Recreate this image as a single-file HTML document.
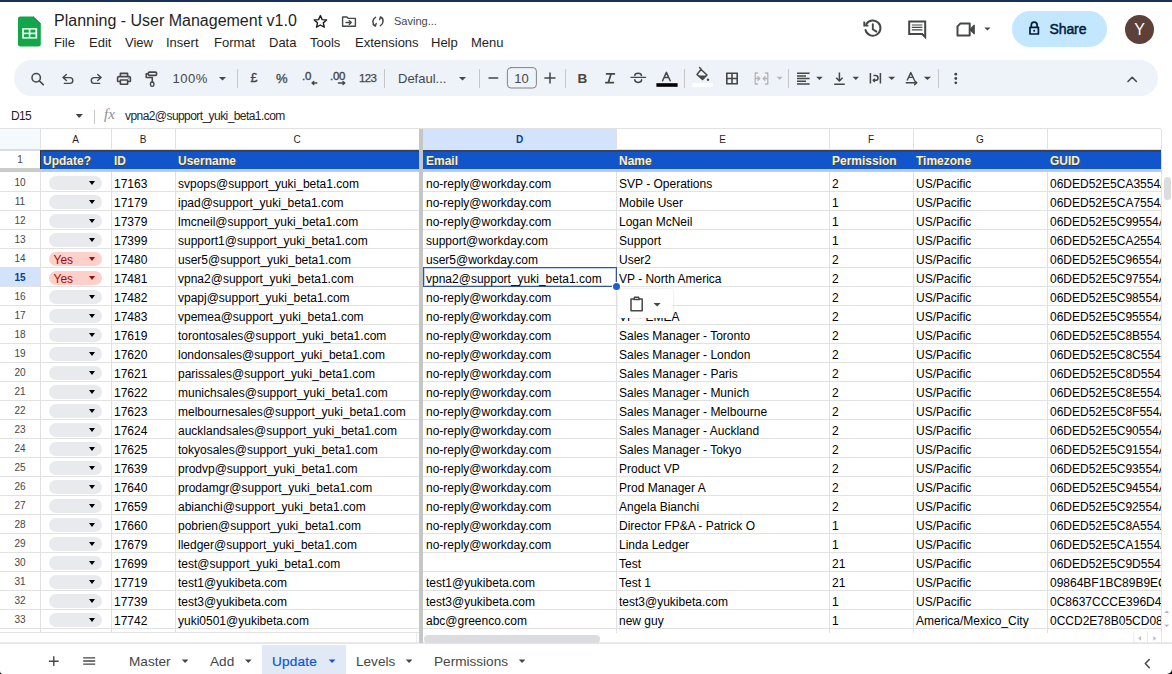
<!DOCTYPE html>
<html><head><meta charset="utf-8">
<style>
*{box-sizing:border-box;margin:0;padding:0}
html,body{width:1172px;height:674px;overflow:hidden;background:#fff;font-family:"Liberation Sans",sans-serif;color:#1f1f1f;position:relative}
.abs{position:absolute}
#topbar{position:absolute;left:0;top:0;width:1172px;height:2px;background:#1a3157}
#logo{position:absolute;left:18.2px;top:16px;width:23px;height:31px}
#title{position:absolute;left:54px;top:12px;font-size:16px;color:#1f1f1f;white-space:nowrap;letter-spacing:0px}
.menu{position:absolute;top:35px;font-size:13px;color:#1f1f1f;white-space:nowrap}
#saving{position:absolute;left:394px;top:15px;font-size:11px;color:#444746}
.ico{position:absolute}
#toolbar{position:absolute;left:14px;top:60px;width:1144px;height:36px;border-radius:18px;background:#eef2f9}
.sep{position:absolute;top:69px;width:1px;height:19px;background:#c7c7c7}
.tt{position:absolute;font-size:12.5px;color:#444746;white-space:nowrap}
.arr{position:absolute;width:0;height:0;border-left:3.5px solid transparent;border-right:3.5px solid transparent;border-top:4px solid #444746}
#share{position:absolute;left:1012px;top:11px;width:95px;height:36px;border-radius:18px;background:#c2e7ff}
#sharetxt{position:absolute;left:1049.5px;top:20.5px;font-size:14px;color:#001d35;-webkit-text-stroke:0.45px #001d35;letter-spacing:-0.1px}
#avatar{position:absolute;left:1125px;top:14.5px;width:29px;height:29px;border-radius:14.5px;background:#5d4037;color:#fff;font-size:16px;text-align:center;line-height:30px}
/* formula bar */
#namebox{position:absolute;left:11px;top:109px;font-size:12px;color:#1f1f1f;letter-spacing:-0.7px}
#fx{position:absolute;left:104px;top:106px;font-size:15px;color:#8e8e8e;font-family:"Liberation Serif",serif;font-style:italic}
#ftext{position:absolute;left:125px;top:109px;font-size:12px;color:#1f1f1f;white-space:nowrap;letter-spacing:-0.57px}
/* grid */
#colhdr{position:absolute;left:0;top:128px;width:1161px;height:23px;background:#fff;border-top:1px solid #e1e1e1}
.ch{position:absolute;top:129px;height:21px;font-size:10px;color:#1f1f1f;text-align:center;line-height:21px}
.ch.sel{background:#d3e3fd;color:#0b3d91;font-weight:bold}
.vl{position:absolute;width:1px;background:#e1e1e1}
.hl{position:absolute;left:0;width:1161px;height:1px;background:#e2e2e2}
.rh{position:absolute;left:0;width:40px;height:19px;font-size:10px;color:#444746;text-align:center;line-height:21px}
.rh.sel{background:#d3e3fd;color:#0b3d91;font-weight:bold}
.c{position:absolute;height:19px;padding-left:3px;font-size:12px;line-height:19px;color:#000;white-space:nowrap;overflow:hidden}
.chip{position:absolute;left:49px;width:53px;height:14px;border-radius:7px;background:#e8eaed}
.chip i{position:absolute;left:40px;top:4.5px;width:0;height:0;border-left:3.7px solid transparent;border-right:3.7px solid transparent;border-top:4.3px solid #000}
.chip.yes{background:#ffcfc9}
.chip.yes span{position:absolute;left:4.5px;top:-1.3px;font-size:12px;line-height:18px;color:#a00d0d}
.chip.yes i{border-top-color:#9a0c0c}
#hdrrow{position:absolute;left:40px;top:150px;width:1121px;height:19px;background:#1155cc;border-top:2px solid #3a4254;border-left:1px solid #2a3448}
.hc{position:absolute;top:152px;height:18px;font-size:12px;font-weight:bold;line-height:18px;color:#f7f3e0;text-shadow:1px 1px 0 #4d4010;white-space:nowrap}
#tabs{position:absolute;left:0;top:643px;width:1172px;height:31px;background:#fff;border-top:1px solid #dfe6ee}
.tab{position:absolute;top:654px;font-size:13.6px;color:#444746;white-space:nowrap}
#selbox{position:absolute;left:423px;top:267px;width:194px;height:20px;border:1px solid #33569a;box-shadow:inset 0 0 0 1px #bcd3f5}
#handle{position:absolute;left:612.5px;top:283.3px;width:7px;height:7px;border-radius:3.5px;background:#1b5fd2;box-shadow:0 0 0 1px #fff}
#paste{position:absolute;left:618px;top:289px;width:55px;height:29px;background:#fff;border-radius:3px;box-shadow:0 0 2px rgba(0,0,0,.18)}
#corner{position:absolute;left:0;top:129px;width:40px;height:21px;background:#f4fafd}
</style></head>
<body>
<div id="topbar"></div>
<!-- logo -->
<svg id="logo" viewBox="0 0 23 31" width="23" height="31">
  <path d="M2.2 0.5 H15 L22.8 8 V28.5 A2.2 2.2 0 0 1 20.6 30.5 H2.2 A2.2 2.2 0 0 1 0 28.5 V2.7 A2.2 2.2 0 0 1 2.2 0.5Z" fill="#13a54a"/>
  <path d="M15 0.5 L22.8 8" stroke="#0d3b66" stroke-width="0.8" fill="none"/>
  <rect x="4.2" y="12.2" width="15" height="10.4" fill="#fff"/>
  <rect x="5.8" y="13.6" width="5" height="3" fill="#13a54a"/>
  <rect x="12.4" y="13.6" width="5" height="3" fill="#13a54a"/>
  <rect x="5.8" y="18.2" width="5" height="3" fill="#13a54a"/>
  <rect x="12.4" y="18.2" width="5" height="3" fill="#13a54a"/>
</svg>
<div id="title">Planning - User Management v1.0</div>
<div class="menu" style="left:54px">File</div>
<div class="menu" style="left:89px">Edit</div>
<div class="menu" style="left:125px">View</div>
<div class="menu" style="left:166px">Insert</div>
<div class="menu" style="left:214px">Format</div>
<div class="menu" style="left:269px">Data</div>
<div class="menu" style="left:310px">Tools</div>
<div class="menu" style="left:355px">Extensions</div>
<div class="menu" style="left:431px">Help</div>
<div class="menu" style="left:471px">Menu</div>
<div id="saving">Saving...</div>

<div id="share"></div>
<div id="sharetxt">Share</div>
<div id="avatar">Y</div>

<div id="toolbar"></div>
<div class="sep" style="left:237px"></div>
<div class="sep" style="left:384px"></div>
<div class="sep" style="left:479px"></div>
<div class="sep" style="left:565px"></div>
<div class="sep" style="left:684px"></div>
<div class="sep" style="left:788px"></div>
<div class="sep" style="left:938px"></div>
<div class="tt" style="left:172.5px;top:71px;font-size:13px;letter-spacing:0.5px">100%</div>
<div class="tt" style="left:250.5px;top:71px;font-size:12.5px;-webkit-text-stroke:0.35px #444746">&#163;</div>
<div class="tt" style="left:276px;top:71px;font-size:13px;-webkit-text-stroke:0.3px #444746">%</div>
<div class="tt" style="left:302px;top:70px;font-size:11.5px;-webkit-text-stroke:0.35px #444746;letter-spacing:-0.3px">.0</div>
<div class="tt" style="left:330px;top:70px;font-size:11.5px;-webkit-text-stroke:0.35px #444746;letter-spacing:-0.3px">.00</div>
<div class="tt" style="left:359px;top:72px;font-size:11.5px;letter-spacing:-0.6px;-webkit-text-stroke:0.25px #444746">123</div>
<div class="tt" style="left:398px;top:71px;font-size:13px">Defaul...</div>
<div class="tt" style="left:514px;top:71px;font-size:13px;width:15px;text-align:center">10</div>
<div class="tt" style="left:577.5px;top:70.5px;font-size:13.5px;font-weight:bold">B</div>


<div id="namebox">D15</div>
<div class="arr" style="left:76px;top:114px"></div>
<div class="sep" style="left:94px;top:110px;height:14px"></div>
<div id="fx">fx</div>
<div id="ftext">vpna2@support_yuki_beta1.com</div>

<!-- grid -->
<div id="colhdr"></div><div id="corner"></div><div class="abs" style="left:0;top:149px;width:1161px;height:2px;background:#dadce0"></div>
<div class="ch" style="left:40px;width:71px">A</div><div class="ch" style="left:111px;width:64px">B</div><div class="ch" style="left:175px;width:244px">C</div><div class="ch sel" style="left:423px;width:193px">D</div><div class="ch" style="left:616px;width:213px">E</div><div class="ch" style="left:829px;width:84px">F</div><div class="ch" style="left:913px;width:134px">G</div><div class="hl" style="top:191px"></div><div class="hl" style="top:210px"></div><div class="hl" style="top:229px"></div><div class="hl" style="top:248px"></div><div class="hl" style="top:267px"></div><div class="hl" style="top:286px"></div><div class="hl" style="top:305px"></div><div class="hl" style="top:324px"></div><div class="hl" style="top:343px"></div><div class="hl" style="top:362px"></div><div class="hl" style="top:381px"></div><div class="hl" style="top:400px"></div><div class="hl" style="top:419px"></div><div class="hl" style="top:438px"></div><div class="hl" style="top:457px"></div><div class="hl" style="top:476px"></div><div class="hl" style="top:495px"></div><div class="hl" style="top:514px"></div><div class="hl" style="top:533px"></div><div class="hl" style="top:552px"></div><div class="hl" style="top:571px"></div><div class="hl" style="top:590px"></div><div class="hl" style="top:609px"></div><div class="hl" style="top:628px"></div><div class="vl" style="left:40px;top:129px;height:504px"></div><div class="vl" style="left:111px;top:129px;height:504px"></div><div class="vl" style="left:175px;top:129px;height:504px"></div><div class="vl" style="left:616px;top:129px;height:504px"></div><div class="vl" style="left:829px;top:129px;height:504px"></div><div class="vl" style="left:913px;top:129px;height:504px"></div><div class="vl" style="left:1047px;top:129px;height:504px"></div><div class="vl" style="left:1161px;top:129px;height:504px;background:#e3e3e3"></div>
<div class="rh" style="top:172px">10</div>
<div class="chip" style="top:176px"><i></i></div>
<div class="c" style="top:175px;left:111px;width:64px">17163</div>
<div class="c" style="top:175px;left:175px;width:244px">svpops@support_yuki_beta1.com</div>
<div class="c" style="top:175px;left:423px;width:193px">no-reply@workday.com</div>
<div class="c" style="top:175px;left:616px;width:213px">SVP - Operations</div>
<div class="c" style="top:175px;left:829px;width:84px">2</div>
<div class="c" style="top:175px;left:913px;width:134px">US/Pacific</div>
<div class="c" style="top:175px;left:1047px;width:114px">06DED52E5CA3554A</div>
<div class="rh" style="top:191px">11</div>
<div class="chip" style="top:195px"><i></i></div>
<div class="c" style="top:194px;left:111px;width:64px">17179</div>
<div class="c" style="top:194px;left:175px;width:244px">ipad@support_yuki_beta1.com</div>
<div class="c" style="top:194px;left:423px;width:193px">no-reply@workday.com</div>
<div class="c" style="top:194px;left:616px;width:213px">Mobile User</div>
<div class="c" style="top:194px;left:829px;width:84px">1</div>
<div class="c" style="top:194px;left:913px;width:134px">US/Pacific</div>
<div class="c" style="top:194px;left:1047px;width:114px">06DED52E5CA7554A</div>
<div class="rh" style="top:210px">12</div>
<div class="chip" style="top:214px"><i></i></div>
<div class="c" style="top:213px;left:111px;width:64px">17379</div>
<div class="c" style="top:213px;left:175px;width:244px">lmcneil@support_yuki_beta1.com</div>
<div class="c" style="top:213px;left:423px;width:193px">no-reply@workday.com</div>
<div class="c" style="top:213px;left:616px;width:213px">Logan McNeil</div>
<div class="c" style="top:213px;left:829px;width:84px">1</div>
<div class="c" style="top:213px;left:913px;width:134px">US/Pacific</div>
<div class="c" style="top:213px;left:1047px;width:114px">06DED52E5C99554A</div>
<div class="rh" style="top:229px">13</div>
<div class="chip" style="top:233px"><i></i></div>
<div class="c" style="top:232px;left:111px;width:64px">17399</div>
<div class="c" style="top:232px;left:175px;width:244px">support1@support_yuki_beta1.com</div>
<div class="c" style="top:232px;left:423px;width:193px">support@workday.com</div>
<div class="c" style="top:232px;left:616px;width:213px">Support</div>
<div class="c" style="top:232px;left:829px;width:84px">1</div>
<div class="c" style="top:232px;left:913px;width:134px">US/Pacific</div>
<div class="c" style="top:232px;left:1047px;width:114px">06DED52E5CA2554A</div>
<div class="rh" style="top:248px">14</div>
<div class="chip yes" style="top:252px"><span>Yes</span><i></i></div>
<div class="c" style="top:251px;left:111px;width:64px">17480</div>
<div class="c" style="top:251px;left:175px;width:244px">user5@support_yuki_beta1.com</div>
<div class="c" style="top:251px;left:423px;width:193px">user5@workday.com</div>
<div class="c" style="top:251px;left:616px;width:213px">User2</div>
<div class="c" style="top:251px;left:829px;width:84px">2</div>
<div class="c" style="top:251px;left:913px;width:134px">US/Pacific</div>
<div class="c" style="top:251px;left:1047px;width:114px">06DED52E5C96554A</div>
<div class="rh sel" style="top:267px">15</div>
<div class="chip yes" style="top:271px"><span>Yes</span><i></i></div>
<div class="c" style="top:270px;left:111px;width:64px">17481</div>
<div class="c" style="top:270px;left:175px;width:244px">vpna2@support_yuki_beta1.com</div>
<div class="c" style="top:270px;left:423px;width:193px;z-index:5">vpna2@support_yuki_beta1.com</div>
<div class="c" style="top:270px;left:616px;width:213px">VP - North America</div>
<div class="c" style="top:270px;left:829px;width:84px">2</div>
<div class="c" style="top:270px;left:913px;width:134px">US/Pacific</div>
<div class="c" style="top:270px;left:1047px;width:114px">06DED52E5C97554A</div>
<div class="rh" style="top:286px">16</div>
<div class="chip" style="top:290px"><i></i></div>
<div class="c" style="top:289px;left:111px;width:64px">17482</div>
<div class="c" style="top:289px;left:175px;width:244px">vpapj@support_yuki_beta1.com</div>
<div class="c" style="top:289px;left:423px;width:193px">no-reply@workday.com</div>
<div class="c" style="top:289px;left:616px;width:213px">VP - APJ</div>
<div class="c" style="top:289px;left:829px;width:84px">2</div>
<div class="c" style="top:289px;left:913px;width:134px">US/Pacific</div>
<div class="c" style="top:289px;left:1047px;width:114px">06DED52E5C98554A</div>
<div class="rh" style="top:305px">17</div>
<div class="chip" style="top:309px"><i></i></div>
<div class="c" style="top:308px;left:111px;width:64px">17483</div>
<div class="c" style="top:308px;left:175px;width:244px">vpemea@support_yuki_beta1.com</div>
<div class="c" style="top:308px;left:423px;width:193px">no-reply@workday.com</div>
<div class="c" style="top:308px;left:616px;width:213px">VP - EMEA</div>
<div class="c" style="top:308px;left:829px;width:84px">2</div>
<div class="c" style="top:308px;left:913px;width:134px">US/Pacific</div>
<div class="c" style="top:308px;left:1047px;width:114px">06DED52E5C95554A</div>
<div class="rh" style="top:324px">18</div>
<div class="chip" style="top:328px"><i></i></div>
<div class="c" style="top:327px;left:111px;width:64px">17619</div>
<div class="c" style="top:327px;left:175px;width:244px">torontosales@support_yuki_beta1.com</div>
<div class="c" style="top:327px;left:423px;width:193px">no-reply@workday.com</div>
<div class="c" style="top:327px;left:616px;width:213px">Sales Manager - Toronto</div>
<div class="c" style="top:327px;left:829px;width:84px">2</div>
<div class="c" style="top:327px;left:913px;width:134px">US/Pacific</div>
<div class="c" style="top:327px;left:1047px;width:114px">06DED52E5C8B554A</div>
<div class="rh" style="top:343px">19</div>
<div class="chip" style="top:347px"><i></i></div>
<div class="c" style="top:346px;left:111px;width:64px">17620</div>
<div class="c" style="top:346px;left:175px;width:244px">londonsales@support_yuki_beta1.com</div>
<div class="c" style="top:346px;left:423px;width:193px">no-reply@workday.com</div>
<div class="c" style="top:346px;left:616px;width:213px">Sales Manager - London</div>
<div class="c" style="top:346px;left:829px;width:84px">2</div>
<div class="c" style="top:346px;left:913px;width:134px">US/Pacific</div>
<div class="c" style="top:346px;left:1047px;width:114px">06DED52E5C8C554A</div>
<div class="rh" style="top:362px">20</div>
<div class="chip" style="top:366px"><i></i></div>
<div class="c" style="top:365px;left:111px;width:64px">17621</div>
<div class="c" style="top:365px;left:175px;width:244px">parissales@support_yuki_beta1.com</div>
<div class="c" style="top:365px;left:423px;width:193px">no-reply@workday.com</div>
<div class="c" style="top:365px;left:616px;width:213px">Sales Manager - Paris</div>
<div class="c" style="top:365px;left:829px;width:84px">2</div>
<div class="c" style="top:365px;left:913px;width:134px">US/Pacific</div>
<div class="c" style="top:365px;left:1047px;width:114px">06DED52E5C8D554A</div>
<div class="rh" style="top:381px">21</div>
<div class="chip" style="top:385px"><i></i></div>
<div class="c" style="top:384px;left:111px;width:64px">17622</div>
<div class="c" style="top:384px;left:175px;width:244px">munichsales@support_yuki_beta1.com</div>
<div class="c" style="top:384px;left:423px;width:193px">no-reply@workday.com</div>
<div class="c" style="top:384px;left:616px;width:213px">Sales Manager - Munich</div>
<div class="c" style="top:384px;left:829px;width:84px">2</div>
<div class="c" style="top:384px;left:913px;width:134px">US/Pacific</div>
<div class="c" style="top:384px;left:1047px;width:114px">06DED52E5C8E554A</div>
<div class="rh" style="top:400px">22</div>
<div class="chip" style="top:404px"><i></i></div>
<div class="c" style="top:403px;left:111px;width:64px">17623</div>
<div class="c" style="top:403px;left:175px;width:244px">melbournesales@support_yuki_beta1.com</div>
<div class="c" style="top:403px;left:423px;width:193px">no-reply@workday.com</div>
<div class="c" style="top:403px;left:616px;width:213px">Sales Manager - Melbourne</div>
<div class="c" style="top:403px;left:829px;width:84px">2</div>
<div class="c" style="top:403px;left:913px;width:134px">US/Pacific</div>
<div class="c" style="top:403px;left:1047px;width:114px">06DED52E5C8F554A</div>
<div class="rh" style="top:419px">23</div>
<div class="chip" style="top:423px"><i></i></div>
<div class="c" style="top:422px;left:111px;width:64px">17624</div>
<div class="c" style="top:422px;left:175px;width:244px">aucklandsales@support_yuki_beta1.com</div>
<div class="c" style="top:422px;left:423px;width:193px">no-reply@workday.com</div>
<div class="c" style="top:422px;left:616px;width:213px">Sales Manager - Auckland</div>
<div class="c" style="top:422px;left:829px;width:84px">2</div>
<div class="c" style="top:422px;left:913px;width:134px">US/Pacific</div>
<div class="c" style="top:422px;left:1047px;width:114px">06DED52E5C90554A</div>
<div class="rh" style="top:438px">24</div>
<div class="chip" style="top:442px"><i></i></div>
<div class="c" style="top:441px;left:111px;width:64px">17625</div>
<div class="c" style="top:441px;left:175px;width:244px">tokyosales@support_yuki_beta1.com</div>
<div class="c" style="top:441px;left:423px;width:193px">no-reply@workday.com</div>
<div class="c" style="top:441px;left:616px;width:213px">Sales Manager - Tokyo</div>
<div class="c" style="top:441px;left:829px;width:84px">2</div>
<div class="c" style="top:441px;left:913px;width:134px">US/Pacific</div>
<div class="c" style="top:441px;left:1047px;width:114px">06DED52E5C91554A</div>
<div class="rh" style="top:457px">25</div>
<div class="chip" style="top:461px"><i></i></div>
<div class="c" style="top:460px;left:111px;width:64px">17639</div>
<div class="c" style="top:460px;left:175px;width:244px">prodvp@support_yuki_beta1.com</div>
<div class="c" style="top:460px;left:423px;width:193px">no-reply@workday.com</div>
<div class="c" style="top:460px;left:616px;width:213px">Product VP</div>
<div class="c" style="top:460px;left:829px;width:84px">2</div>
<div class="c" style="top:460px;left:913px;width:134px">US/Pacific</div>
<div class="c" style="top:460px;left:1047px;width:114px">06DED52E5C93554A</div>
<div class="rh" style="top:476px">26</div>
<div class="chip" style="top:480px"><i></i></div>
<div class="c" style="top:479px;left:111px;width:64px">17640</div>
<div class="c" style="top:479px;left:175px;width:244px">prodamgr@support_yuki_beta1.com</div>
<div class="c" style="top:479px;left:423px;width:193px">no-reply@workday.com</div>
<div class="c" style="top:479px;left:616px;width:213px">Prod Manager A</div>
<div class="c" style="top:479px;left:829px;width:84px">2</div>
<div class="c" style="top:479px;left:913px;width:134px">US/Pacific</div>
<div class="c" style="top:479px;left:1047px;width:114px">06DED52E5C94554A</div>
<div class="rh" style="top:495px">27</div>
<div class="chip" style="top:499px"><i></i></div>
<div class="c" style="top:498px;left:111px;width:64px">17659</div>
<div class="c" style="top:498px;left:175px;width:244px">abianchi@support_yuki_beta1.com</div>
<div class="c" style="top:498px;left:423px;width:193px">no-reply@workday.com</div>
<div class="c" style="top:498px;left:616px;width:213px">Angela Bianchi</div>
<div class="c" style="top:498px;left:829px;width:84px">2</div>
<div class="c" style="top:498px;left:913px;width:134px">US/Pacific</div>
<div class="c" style="top:498px;left:1047px;width:114px">06DED52E5C92554A</div>
<div class="rh" style="top:514px">28</div>
<div class="chip" style="top:518px"><i></i></div>
<div class="c" style="top:517px;left:111px;width:64px">17660</div>
<div class="c" style="top:517px;left:175px;width:244px">pobrien@support_yuki_beta1.com</div>
<div class="c" style="top:517px;left:423px;width:193px">no-reply@workday.com</div>
<div class="c" style="top:517px;left:616px;width:213px">Director FP&amp;A - Patrick O</div>
<div class="c" style="top:517px;left:829px;width:84px">1</div>
<div class="c" style="top:517px;left:913px;width:134px">US/Pacific</div>
<div class="c" style="top:517px;left:1047px;width:114px">06DED52E5C8A554A</div>
<div class="rh" style="top:533px">29</div>
<div class="chip" style="top:537px"><i></i></div>
<div class="c" style="top:536px;left:111px;width:64px">17679</div>
<div class="c" style="top:536px;left:175px;width:244px">lledger@support_yuki_beta1.com</div>
<div class="c" style="top:536px;left:423px;width:193px">no-reply@workday.com</div>
<div class="c" style="top:536px;left:616px;width:213px">Linda Ledger</div>
<div class="c" style="top:536px;left:829px;width:84px">1</div>
<div class="c" style="top:536px;left:913px;width:134px">US/Pacific</div>
<div class="c" style="top:536px;left:1047px;width:114px">06DED52E5CA1554A</div>
<div class="rh" style="top:552px">30</div>
<div class="chip" style="top:556px"><i></i></div>
<div class="c" style="top:555px;left:111px;width:64px">17699</div>
<div class="c" style="top:555px;left:175px;width:244px">test@support_yuki_beta1.com</div>
<div class="c" style="top:555px;left:616px;width:213px">Test</div>
<div class="c" style="top:555px;left:829px;width:84px">21</div>
<div class="c" style="top:555px;left:913px;width:134px">US/Pacific</div>
<div class="c" style="top:555px;left:1047px;width:114px">06DED52E5C9D554A</div>
<div class="rh" style="top:571px">31</div>
<div class="chip" style="top:575px"><i></i></div>
<div class="c" style="top:574px;left:111px;width:64px">17719</div>
<div class="c" style="top:574px;left:175px;width:244px">test1@yukibeta.com</div>
<div class="c" style="top:574px;left:423px;width:193px">test1@yukibeta.com</div>
<div class="c" style="top:574px;left:616px;width:213px">Test 1</div>
<div class="c" style="top:574px;left:829px;width:84px">21</div>
<div class="c" style="top:574px;left:913px;width:134px">US/Pacific</div>
<div class="c" style="top:574px;left:1047px;width:114px">09864BF1BC89B9EC</div>
<div class="rh" style="top:590px">32</div>
<div class="chip" style="top:594px"><i></i></div>
<div class="c" style="top:593px;left:111px;width:64px">17739</div>
<div class="c" style="top:593px;left:175px;width:244px">test3@yukibeta.com</div>
<div class="c" style="top:593px;left:423px;width:193px">test3@yukibeta.com</div>
<div class="c" style="top:593px;left:616px;width:213px">test3@yukibeta.com</div>
<div class="c" style="top:593px;left:829px;width:84px">1</div>
<div class="c" style="top:593px;left:913px;width:134px">US/Pacific</div>
<div class="c" style="top:593px;left:1047px;width:114px">0C8637CCCE396D4A</div>
<div class="rh" style="top:609px">33</div>
<div class="chip" style="top:613px"><i></i></div>
<div class="c" style="top:612px;left:111px;width:64px">17742</div>
<div class="c" style="top:612px;left:175px;width:244px">yuki0501@yukibeta.com</div>
<div class="c" style="top:612px;left:423px;width:193px">abc@greenco.com</div>
<div class="c" style="top:612px;left:616px;width:213px">new guy</div>
<div class="c" style="top:612px;left:829px;width:84px">1</div>
<div class="c" style="top:612px;left:913px;width:134px">America/Mexico_City</div>
<div class="c" style="top:612px;left:1047px;width:114px">0CCD2E78B05CD08A</div><div id="hdrrow"></div><div class="hc" style="left:43px">Update?</div><div class="hc" style="left:114px">ID</div><div class="hc" style="left:178px">Username</div><div class="hc" style="left:426px">Email</div><div class="hc" style="left:619px">Name</div><div class="hc" style="left:832px">Permission</div><div class="hc" style="left:916px">Timezone</div><div class="hc" style="left:1050px">GUID</div><div class="rh" style="top:151px;height:18px;line-height:18px">1</div>
<div class="abs" style="left:0;top:168px;width:40px;height:4px;background:#cbcbcb"></div><div class="abs" style="left:40px;top:169px;width:1121px;height:3px;background:#b9cdf0"></div>
<div class="abs" style="left:419px;top:129px;width:4px;height:504px;background:#c4c7c5"></div>
<div id="selbox"></div><div id="handle"></div>
<div id="paste"></div>



<div id="tabs"></div>
<div class="abs" style="left:0;top:633px;width:1172px;height:10px;background:#fff"></div>
<div class="abs" style="left:0;top:632px;width:419px;height:1px;background:#e3e3e3"></div>
<div class="abs" style="left:0;top:642px;width:1172px;height:1px;background:#e8eaed"></div>
<div class="abs" style="left:424px;top:635px;width:176px;height:8px;border-radius:4px;background:#dadce0"></div><div class="abs" style="left:419px;top:633px;width:4px;height:10px;background:#c4c7c5"></div><div class="abs" style="left:416px;top:633px;width:1px;height:10px;background:#ececec"></div>
<div class="abs" style="left:1164px;top:177px;width:7px;height:23px;border-radius:3.5px;background:#dadce0"></div>
<div class="abs" style="left:262px;top:645px;width:84px;height:29px;background:#e1e9f7"></div>
<div class="tab" style="left:129px">Master</div>
<div class="tab" style="left:210px">Add</div>
<div class="tab" style="left:272px;color:#0b57d0;-webkit-text-stroke:0.2px #0b57d0;letter-spacing:0.2px">Update</div>
<div class="tab" style="left:356px">Levels</div>
<div class="tab" style="left:434px">Permissions</div>

<svg id="ov" width="1172" height="674" viewBox="0 0 1172 674" style="position:absolute;left:0;top:0" fill="none" stroke="#444746" stroke-width="1.6" stroke-linecap="round" stroke-linejoin="round">
<!-- title icons -->
<path d="M320.4 15.6 L322.2 19.6 L326.6 20 L323.3 22.9 L324.3 27.2 L320.4 25 L316.5 27.2 L317.5 22.9 L314.2 20 L318.6 19.6 Z" stroke="#1f1f1f" stroke-width="1.4"/>
<path d="M342.6 17 H347 L348.4 18.4 H355.4 V26.2 H342.6 Z" stroke="#444746" stroke-width="1.4"/>
<path d="M346 22.5 H351.2 M349.2 20.6 L351.3 22.5 L349.2 24.4" stroke-width="1.3"/>
<path d="M375.5 17.3 A5 5 0 0 0 375 25.8 M380.4 25.6 A5 5 0 0 0 380.9 17.1" stroke-width="1.5"/>
<path d="M373.2 24.6 L375.4 26 L376.2 23.5 M382.6 18.3 L380.4 17 L379.6 19.5" stroke-width="1.4"/>
<!-- history -->
<path d="M866.3 24.3 A7.6 7.6 0 1 1 865.5 30" stroke="#444746" stroke-width="2"/>
<path d="M864.3 21.5 V25.6 H868.4" stroke-width="1.9" stroke-linecap="butt" stroke-linejoin="miter"/>
<path d="M872.8 24.2 V29.2 L876.4 31.6" stroke-width="1.9"/>
<!-- comment -->
<path d="M909.2 21.5 H925.2 V37 L922.2 34 H909.2 Z" stroke-width="2" stroke-linejoin="miter"/>
<path d="M911.8 25 H922.4 M911.8 27.4 H922.4 M911.8 29.9 H922.4" stroke-width="1.2" stroke-linecap="butt"/>
<!-- camera -->
<path d="M960.5 23.4 H969.7 V35.6 H957.5 V26.4 Z" stroke-width="2"/>
<path d="M970 29.5 L974.2 25.2 V33.8 Z" fill="#444746" stroke-width="1.2"/>
<path d="M984.3 27.4 H990.5 L987.4 30.5 Z" fill="#444746" stroke="none"/>
<!-- lock -->
<path d="M1030 27.3 H1038.4 V34 H1030 Z" stroke="#001d35" stroke-width="1.7"/>
<path d="M1031.3 27.3 V25 A2.9 2.9 0 0 1 1037.1 25 V27.3" stroke="#001d35" stroke-width="1.7"/>
<circle cx="1034.2" cy="30.7" r="1" fill="#001d35" stroke="none"/>
<!-- toolbar -->
<circle cx="36.2" cy="77.8" r="4.2" stroke-width="1.5"/>
<path d="M39.4 81 L43.3 84.7" stroke-width="1.6"/>
<path d="M66.4 74.6 L63 77.6 L66.4 80.6 M63.3 77.6 H69.9 A2.9 2.9 0 0 1 69.9 83.4 H64.4" stroke-width="1.4"/>
<path d="M97.7 74.6 L101.1 77.6 L97.7 80.6 M100.8 77.6 H94.2 A2.9 2.9 0 0 0 94.2 83.4 H99.7" stroke-width="1.4"/>
<path d="M120.4 76.2 V73.4 H127.6 V76.2 M120.4 81.5 H118.2 A1 1 0 0 1 117.6 80.9 V77.7 A1.3 1.3 0 0 1 118.9 76.6 H129.1 A1.3 1.3 0 0 1 130.4 77.7 V80.9 A1 1 0 0 1 129.8 81.5 H127.6 M120.4 80 V84.2 H127.6 V80 H120.4" stroke-width="1.6"/>
<circle cx="128.3" cy="78.3" r="0.5" fill="#444746" stroke="none"/>
<rect x="148.3" y="72.1" width="8.3" height="3.3" rx="1.2" stroke-width="1.6"/>
<path d="M148.3 73.7 H146.2 V77.6 H152.3 V82.2" stroke-width="1.5"/>
<rect x="150.5" y="82" width="3.4" height="4.4" rx="1.6" stroke-width="1.4"/>
<path d="M219 77 H226 L222.5 80.5 Z" fill="#444746" stroke="none"/>
<path d="M312 83 H316.8 M312 83 L313.8 81.4 M312 83 L313.8 84.6" stroke-width="1.3"/>
<path d="M338.4 83 H344.8 M344.8 83 L343 81.4 M344.8 83 L343 84.6" stroke-width="1.3"/>
<path d="M459 77 H466 L462.5 80.5 Z" fill="#444746" stroke="none"/>
<path d="M489 78 H497.6" stroke-width="1.5"/>
<rect x="507.4" y="67.6" width="29" height="20.4" rx="3.5" stroke="#747775" stroke-width="0.9"/>
<path d="M544.9 78 H555 M550 73 V83" stroke-width="1.5"/>
<path d="M606.6 73.9 H614.4 M605.8 82.6 H613.4 M611 73.9 L608.4 82.6" stroke-width="1.7"/>
<path d="M631 77.4 H645.5" stroke-width="1.4"/>
<path d="M634.8 75.6 A3.3 2.3 0 0 1 641.4 75.6 M634.8 79.8 A3.3 2.5 0 0 0 641.6 79.8" stroke-width="1.5"/>
<path d="M662.6 80.7 L666.4 72.4 L670.2 80.7 M664 77.6 H668.8" stroke-width="1.5"/>
<rect x="656.4" y="83.2" width="21.2" height="3.6" fill="#000" stroke="none"/>
<path d="M701 69.5 L697 74.5 L702.5 79.5 L707 75 Z" stroke-width="1.5"/>
<path d="M697.5 75.5 L706.2 75.5 L702.5 79 Z" fill="#444746" stroke="none"/>
<path d="M701 69 L699.5 67.5" stroke-width="1.4"/>
<circle cx="708" cy="79.8" r="1.2" fill="#444746" stroke="none"/>
<rect x="692.3" y="83.2" width="20.5" height="3.6" fill="#fff" stroke="none"/>
<path d="M726.8 73.2 H737.2 V83.7 H726.8 Z M732 73.2 V83.7 M726.8 78.45 H737.2" stroke-width="1.6" stroke-linejoin="miter"/>
<path d="M757.5 73 H755.2 V84 H757.5 M765.5 73 H767.8 V84 H765.5 M755.5 78.5 H759.5 M758 76.8 L759.8 78.5 L758 80.2 M767.5 78.5 H763.5 M765 76.8 L763.2 78.5 L765 80.2" stroke="#b4b4b4" stroke-width="1.3" stroke-dasharray="none"/>
<path d="M776.7 76.8 H782.7 L779.7 79.8 Z" fill="#b4b4b4" stroke="none"/>
<path d="M797 73.3 H809.6 M797 76 H806 M797 78.6 H809.6 M797 81.3 H806 M797 84 H809.6" stroke-width="1.5" stroke-linecap="butt"/>
<path d="M816.2 76.8 H822.8 L819.5 80.1 Z" fill="#444746" stroke="none"/>
<path d="M839.4 72.6 V81 M836.2 77.8 L839.4 81 L842.6 77.8 M834.2 84.3 H844.8" stroke-width="1.5" stroke-linecap="butt"/>
<path d="M852.6 76.8 H859 L855.8 80 Z" fill="#444746" stroke="none"/>
<path d="M870.4 73 V83.6 M880.4 73 V83.6 M873.5 75.5 H875.6 A2.4 2.4 0 0 1 875.6 80.3 H873.6 M874.8 78.7 L873.2 80.3 L874.8 81.9" stroke-width="1.5" stroke-linecap="butt"/>
<path d="M888.2 76.8 H895.2 L891.7 80.1 Z" fill="#444746" stroke="none"/>
<path d="M907.3 80 L910.8 72.6 L914.3 80 M908.6 77.4 H913" stroke-width="1.4"/>
<path d="M906.2 82.8 H916.8 M914.6 80.8 L916.8 82.8 L914.6 84.8" stroke-width="1.4"/>
<path d="M923.8 76.8 H931 L927.4 80.1 Z" fill="#444746" stroke="none"/>
<circle cx="955.8" cy="74.2" r="1.4" fill="#444746" stroke="none"/>
<circle cx="955.8" cy="78.5" r="1.4" fill="#444746" stroke="none"/>
<circle cx="955.8" cy="82.8" r="1.4" fill="#444746" stroke="none"/>
<path d="M1128 81.5 L1132.2 77.3 L1136.4 81.5" stroke-width="1.6"/>
<!-- formula bar -->
<path d="M76 114 H83 L79.5 117.5 Z" fill="#444746" stroke="none"/>
<!-- tabs -->
<path d="M53.8 656.8 V665.6 M49.4 661.2 H58.2" stroke-width="1.4"/>
<path d="M83.2 657.8 H95.2 M83.2 661 H95.2 M83.2 664.2 H95.2" stroke-width="1.3" stroke-linecap="butt"/>
<path d="M181.8 659.6 H188.4 L185.1 662.9 Z" fill="#444746" stroke="none"/>
<path d="M245 659.6 H251.6 L248.3 662.9 Z" fill="#444746" stroke="none"/>
<path d="M328.8 659.6 H335.4 L332.1 662.9 Z" fill="#0b57d0" stroke="none"/>
<path d="M405.8 659.6 H412.4 L409.1 662.9 Z" fill="#444746" stroke="none"/>
<path d="M518.8 659.6 H525.4 L522.1 662.9 Z" fill="#444746" stroke="none"/>
<path d="M1149.3 659.5 L1145.3 663.6 L1149.3 667.7" stroke-width="1.5"/>
<!-- scroll arrows -->
<path d="M1164.2 613 L1166.7 610.2 L1169.2 613 Z M1164.2 624.4 L1166.7 627.2 L1169.2 624.4 Z" fill="#bdbdbd" stroke="none"/>
<path d="M1141 636 L1138.2 638.4 L1141 640.8 Z M1153.4 636 L1156.2 638.4 L1153.4 640.8 Z" fill="#bdbdbd" stroke="none"/>
<path d="M1133.8 633 V643 M1147.5 633 V643 M1161.5 633 V643" stroke="#e8e8e8" stroke-width="1"/>
<!-- clipboard -->
<path d="M633.8 299 H631 V310.8 H642.2 V299 H639.4 M633.8 299.6 L634.6 297.2 H638.6 L639.4 299.6 Z" stroke-width="1.5" stroke-linejoin="round"/>
<path d="M653.5 303 H660.7 L657.1 306.6 Z" fill="#444746" stroke="none"/>
<path d="M0 671 A3 3 0 0 0 3 674 H0 Z" fill="#000" stroke="none"/><path d="M1172 669 A5 5 0 0 1 1167 674 H1172 Z" fill="#000" stroke="none"/>
</svg>
</body></html>
